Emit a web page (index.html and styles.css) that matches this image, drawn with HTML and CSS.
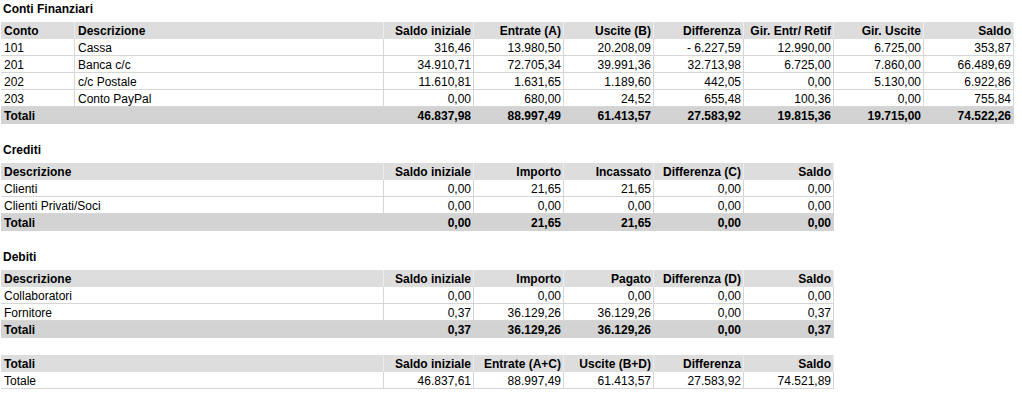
FILE: index.html
```html
<!DOCTYPE html>
<html lang="it">
<head>
<meta charset="utf-8">
<title>Conti</title>
<link rel="stylesheet" href="styles.css">
</head>
<body>
<div class="page">
  <section class="section">
    <div class="title">Conti Finanziari</div>
    <table class="grid wide">
      <colgroup><col class="c-conto"><col class="c-desc1"><col class="c-num"><col class="c-num"><col class="c-num"><col class="c-num"><col class="c-num"><col class="c-num"><col class="c-num"></colgroup>
      <tr class="head"><th class="l">Conto</th><th class="l">Descrizione</th><th>Saldo iniziale</th><th>Entrate (A)</th><th>Uscite (B)</th><th>Differenza</th><th>Gir. Entr/ Retif</th><th>Gir. Uscite</th><th>Saldo</th></tr>
      <tr><td class="l">101</td><td class="l">Cassa</td><td>316,46</td><td>13.980,50</td><td>20.208,09</td><td>- 6.227,59</td><td>12.990,00</td><td>6.725,00</td><td>353,87</td></tr>
      <tr><td class="l">201</td><td class="l">Banca c/c</td><td>34.910,71</td><td>72.705,34</td><td>39.991,36</td><td>32.713,98</td><td>6.725,00</td><td>7.860,00</td><td>66.489,69</td></tr>
      <tr><td class="l">202</td><td class="l">c/c Postale</td><td>11.610,81</td><td>1.631,65</td><td>1.189,60</td><td>442,05</td><td>0,00</td><td>5.130,00</td><td>6.922,86</td></tr>
      <tr><td class="l">203</td><td class="l">Conto PayPal</td><td>0,00</td><td>680,00</td><td>24,52</td><td>655,48</td><td>100,36</td><td>0,00</td><td>755,84</td></tr>
      <tr class="tot"><td class="l">Totali</td><td class="l"></td><td>46.837,98</td><td>88.997,49</td><td>61.413,57</td><td>27.583,92</td><td>19.815,36</td><td>19.715,00</td><td>74.522,26</td></tr>
    </table>
  </section>

  <section class="section">
    <div class="title">Crediti</div>
    <table class="grid narrow">
      <colgroup><col class="c-desc2"><col class="c-num"><col class="c-num"><col class="c-num"><col class="c-num"><col class="c-num"></colgroup>
      <tr class="head"><th class="l">Descrizione</th><th>Saldo iniziale</th><th>Importo</th><th>Incassato</th><th>Differenza (C)</th><th>Saldo</th></tr>
      <tr><td class="l">Clienti</td><td>0,00</td><td>21,65</td><td>21,65</td><td>0,00</td><td>0,00</td></tr>
      <tr><td class="l">Clienti Privati/Soci</td><td>0,00</td><td>0,00</td><td>0,00</td><td>0,00</td><td>0,00</td></tr>
      <tr class="tot"><td class="l">Totali</td><td>0,00</td><td>21,65</td><td>21,65</td><td>0,00</td><td>0,00</td></tr>
    </table>
  </section>

  <section class="section">
    <div class="title">Debiti</div>
    <table class="grid narrow">
      <colgroup><col class="c-desc2"><col class="c-num"><col class="c-num"><col class="c-num"><col class="c-num"><col class="c-num"></colgroup>
      <tr class="head"><th class="l">Descrizione</th><th>Saldo iniziale</th><th>Importo</th><th>Pagato</th><th>Differenza (D)</th><th>Saldo</th></tr>
      <tr><td class="l">Collaboratori</td><td>0,00</td><td>0,00</td><td>0,00</td><td>0,00</td><td>0,00</td></tr>
      <tr><td class="l">Fornitore</td><td>0,37</td><td>36.129,26</td><td>36.129,26</td><td>0,00</td><td>0,37</td></tr>
      <tr class="tot"><td class="l">Totali</td><td>0,37</td><td>36.129,26</td><td>36.129,26</td><td>0,00</td><td>0,37</td></tr>
    </table>
  </section>

  <section class="section">
    <table class="grid narrow">
      <colgroup><col class="c-desc2"><col class="c-num"><col class="c-num"><col class="c-num"><col class="c-num"><col class="c-num"></colgroup>
      <tr class="head"><th class="l">Totali</th><th>Saldo iniziale</th><th>Entrate (A+C)</th><th>Uscite (B+D)</th><th>Differenza</th><th>Saldo</th></tr>
      <tr><td class="l">Totale</td><td>46.837,61</td><td>88.997,49</td><td>61.413,57</td><td>27.583,92</td><td>74.521,89</td></tr>
    </table>
  </section>
</div>
</body>
</html>
```

FILE: styles.css
```css
html, body {
  margin: 0;
  padding: 0;
  background: #ffffff;
}

body {
  font-family: "Liberation Sans", Arial, sans-serif;
  font-size: 12px;
  color: #000000;
}

.page {
  display: flex;
  flex-direction: column;
  gap: 17px;
}

.section {
  display: flex;
  flex-direction: column;
  gap: 5px;
}

.title {
  box-sizing: border-box;
  font-weight: bold;
  height: 17px;
  padding: 2px 0 0 3px;
  line-height: 15px;
}

.grid {
  table-layout: fixed;
  border-collapse: separate;
  border-spacing: 0;
  margin-left: 1px;
}

.grid.wide { width: 1013px; }
.grid.narrow { width: 833px; }

.c-conto { width: 74px; }
.c-desc1 { width: 309px; }
.c-desc2 { width: 383px; }
.c-num { width: 90px; }

.grid th,
.grid td {
  box-sizing: border-box;
  height: 17px;
  line-height: 14px;
  padding: 2px 2px 0 3px;
  text-align: right;
  white-space: nowrap;
  overflow: hidden;
  border-right: 1px solid #d6d6d6;
  border-bottom: 1px solid #d6d6d6;
}

.grid .l { text-align: left; }

.grid .head th {
  background: #dddddd;
  font-weight: bold;
  border-right-color: #ececec;
  border-bottom-color: #dddddd;
}

.grid .tot td {
  background: #d3d3d3;
  font-weight: bold;
  border-right-color: #d3d3d3;
  border-bottom-color: #d3d3d3;
}
```
